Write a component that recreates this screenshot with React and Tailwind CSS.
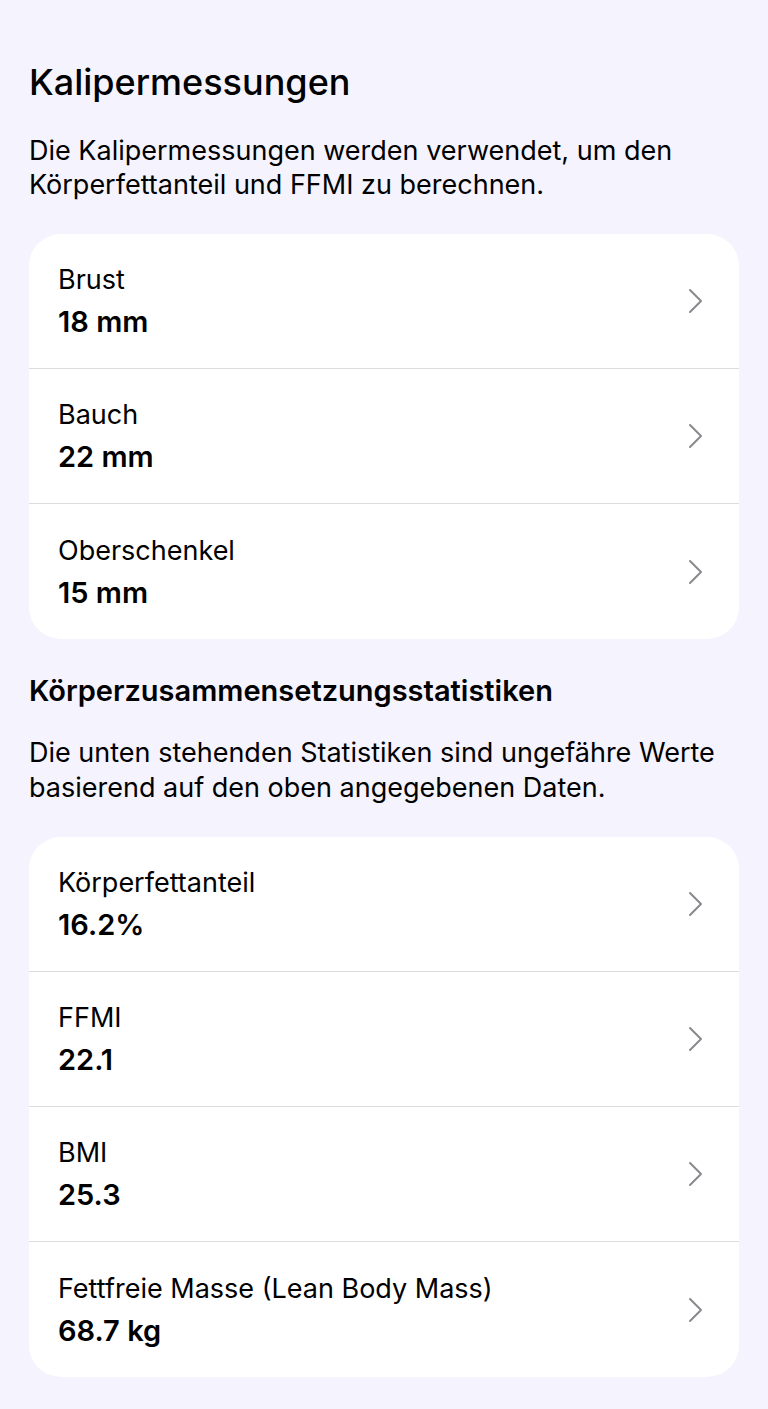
import React from 'react';

const calipers = [
    { label: 'Brust', value: '18 mm' },
    { label: 'Bauch', value: '22 mm' },
    { label: 'Oberschenkel', value: '15 mm' },
];

const stats = [
    { label: 'Körperfettanteil', value: '16.2%' },
    { label: 'FFMI', value: '22.1' },
    { label: 'BMI', value: '25.3' },
    { label: 'Fettfreie Masse (Lean Body Mass)', value: '68.7 kg' },
];

// iOS style disclosure chevron
const Chevron = () => (
    <svg width="18" height="28" viewBox="0 0 18 28" fill="none" className="text-[#8a8a8e]">
        <polyline points="3,3 14,14 3,25" stroke="currentColor" strokeWidth="2" strokeLinecap="round" strokeLinejoin="round" />
    </svg>
);

const Row = ({ label, value, last }) => (
    <div className={`flex items-center h-[135px] pl-[29px] pr-[34px] ${last ? '' : 'border-b border-[#dcdcdf]'}`}>
        <div className="flex-grow flex flex-col gap-[8px]">
            <p className="text-[27px] leading-[34px] text-black">{label}</p>
            <p className="text-[29px] leading-[34px] font-semibold text-black">{value}</p>
        </div>
        <Chevron />
    </div>
);

const Card = ({ items }) => (
    <div className="bg-white rounded-[32px] overflow-hidden">
        {items.map((item, i) => (
            <Row key={item.label} label={item.label} value={item.value} last={i === items.length - 1} />
        ))}
    </div>
);

export default function App() {
    return (
        <div
            className="min-h-[1409px] bg-[#f5f3fe] px-[29px] pt-[62px] pb-[33px]"
            style={{ fontFamily: 'Inter, "Liberation Sans", sans-serif' }}
        >
            <h1 className="text-[36px] leading-[40px] font-medium text-black">Kalipermessungen</h1>
            <p className="mt-[32px] text-[27px] leading-[34px] text-black">
                Die Kalipermessungen werden verwendet, um den Körperfettanteil und FFMI zu berechnen.
            </p>
            <div className="mt-[32px]">
                <Card items={calipers} />
            </div>

            <h2 className="mt-[34px] text-[29px] leading-[36px] font-semibold text-black">Körperzusammensetzungsstatistiken</h2>
            <p className="mt-[26px] text-[27px] leading-[35px] text-black">
                Die unten stehenden Statistiken sind ungefähre Werte basierend auf den oben angegebenen Daten.
            </p>
            <div className="mt-[32px]">
                <Card items={stats} />
            </div>
        </div>
    );
}
